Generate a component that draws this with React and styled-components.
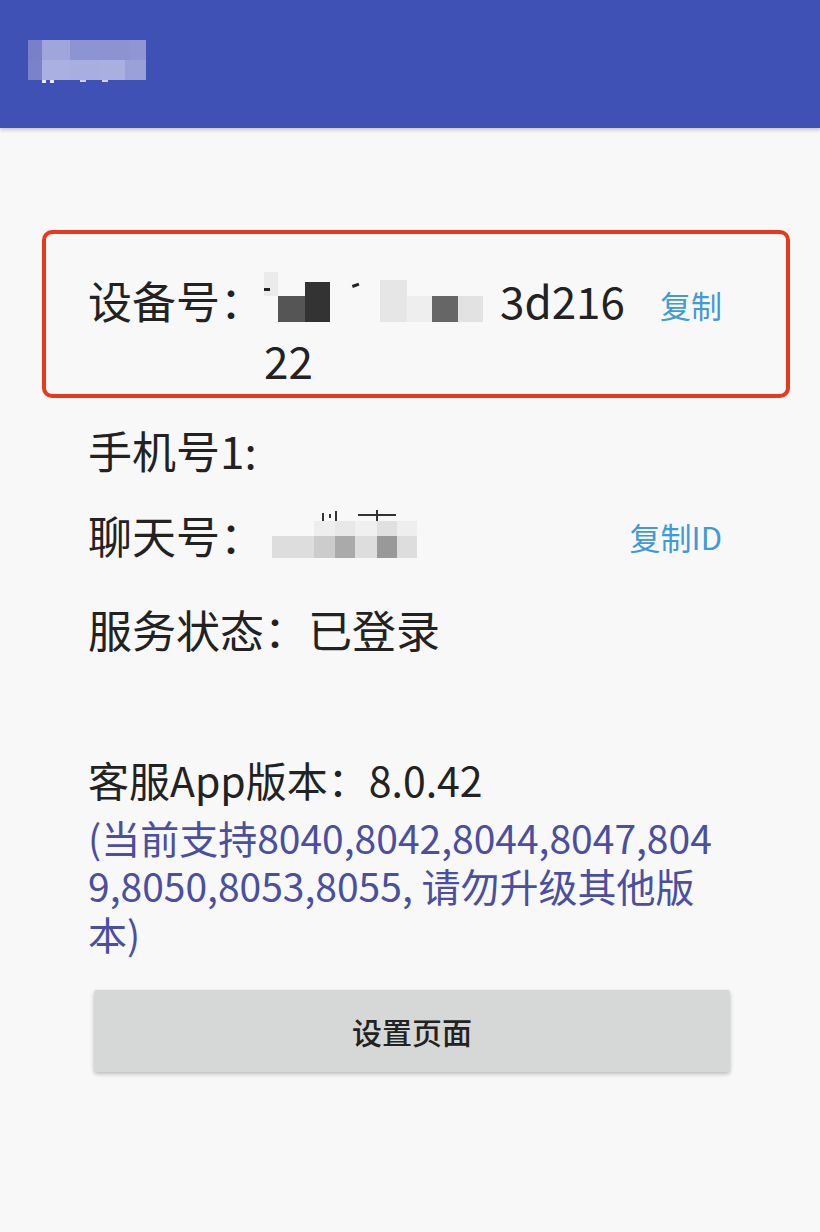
import styled, { createGlobalStyle } from "styled-components";

const GlobalStyle = createGlobalStyle`
  html, body {
    margin: 0;
    padding: 0;
    background: #f8f8f8;
  }
  body {
    font-family: "Noto Sans CJK SC", "Noto Sans", sans-serif;
    color: #222;
  }
`;

const Pagina = styled.div`
  width: 820px;
  min-height: 1232px;
  background: #f8f8f8;
`;

const Cabecera = styled.header`
  height: 128px;
  background: #3f51b5;
  box-shadow: 0 2px 4px rgba(0, 0, 0, 0.22);
  display: flex;
  align-items: flex-start;
  padding: 40px 0 0 28px;
  box-sizing: border-box;
`;

const Contenido = styled.main`
  padding: 102px 30px 0 42px;
  display: flex;
  flex-direction: column;
`;

const CajaDestacada = styled.section`
  border: 4px solid #e6391f;
  border-radius: 10px;
  padding: 36px 64px 4px 42px;
`;

const Fila = styled.div`
  display: flex;
  align-items: flex-start;
  margin-top: ${props => props.$top || 0}px;
  padding: ${props => (props.$inset ? "0 68px 0 46px" : "0")};
  font-size: 44px;
  line-height: 60px;
  min-height: 60px;
`;

const Etiqueta = styled.span`
  flex-shrink: 0;
  white-space: nowrap;
`;

const Valor = styled.span`
  flex: 1;
  min-width: 0;
  word-break: break-all;
  padding-left: ${props => props.$pad || 0}px;
`;

const Mosaico = styled.svg`
  display: inline-block;
  vertical-align: ${props => props.$shift || 0}px;
`;

const Copiar = styled.span`
  flex-shrink: 0;
  font-size: 31px;
  line-height: 60px;
  color: #3f9ad6;
  margin-top: ${props => props.$top || 0}px;
  margin-left: ${props => props.$gap || 0}px;
`;

const Version = styled.div`
  margin-top: 90px;
  padding-left: 46px;
  font-size: 41px;
  line-height: 60px;
`;

const Nota = styled.p`
  margin: 4px 0 0;
  padding-left: 46px;
  font-size: 39px;
  line-height: 48px;
  color: #4a4f9e;
`;

const Boton = styled.button`
  margin: 33px 60px 0 52px;
  height: 82px;
  border: none;
  border-radius: 3px;
  background: #d6d7d7;
  box-shadow: 0 2px 4px rgba(0, 0, 0, 0.25);
  font-family: "Noto Sans CJK SC", sans-serif;
  font-size: 30px;
  font-weight: 500;
  color: #222;
  cursor: pointer;
`;

const bloques = (lista) =>
  lista.map(([x, y, w, h, c], i) => <rect key={i} x={x} y={y} width={w} height={h} fill={c} />);

const TituloBorroso = () => (
  <svg width="118" height="44" viewBox="0 0 118 44">
    {bloques([
      [0, 0, 14, 20, "#7880c8"],
      [14, 0, 28, 20, "#a0a6dc"],
      [42, 0, 30, 20, "#8d94d2"],
      [72, 0, 30, 20, "#8c93d0"],
      [102, 0, 16, 20, "#8f96d3"],
      [0, 20, 14, 20, "#7a82c9"],
      [14, 20, 28, 20, "#aab0e0"],
      [42, 20, 30, 20, "#a8aede"],
      [72, 20, 25, 20, "#a9afde"],
      [97, 20, 21, 20, "#9aa1d8"],
      [14, 40, 4, 3, "#e8eaf8"],
      [22, 40, 4, 3, "#e8eaf8"],
      [52, 40, 6, 2, "#cfd3f0"],
      [74, 40, 6, 2, "#cfd3f0"],
    ])}
  </svg>
);

const DispositivoBorroso = () => (
  <Mosaico $shift={-3} width="236" height="50" viewBox="0 0 236 50">
    {bloques([
      [0, 0, 14, 24, "#ebebeb"],
      [14, 24, 27, 26, "#555"],
      [41, 10, 25, 40, "#333"],
      [116, 8, 27, 42, "#e6e6e6"],
      [143, 24, 25, 26, "#eeeeee"],
      [168, 24, 26, 26, "#666"],
      [194, 24, 25, 26, "#e2e2e2"],
    ])}
    <rect x="0" y="16" width="6" height="3" fill="#222" />
    <rect x="88" y="12" width="7" height="3" fill="#222" transform="rotate(-20 91 13)" />
  </Mosaico>
);

const ChatBorroso = () => (
  <Mosaico $shift={-4} width="145" height="50" viewBox="0 0 145 50">
    {bloques([
      [42, 13, 21, 15, "#eeeeee"],
      [63, 13, 20, 15, "#e8e8e8"],
      [83, 13, 22, 15, "#f0f0f0"],
      [105, 13, 20, 15, "#e0e0e0"],
      [125, 13, 20, 15, "#eeeeee"],
      [0, 28, 42, 22, "#dddddd"],
      [42, 28, 21, 22, "#cccccc"],
      [63, 28, 20, 22, "#aaaaaa"],
      [83, 28, 22, 22, "#dddddd"],
      [105, 28, 20, 22, "#999999"],
      [125, 28, 20, 22, "#dddddd"],
    ])}
    <rect x="50" y="5" width="2" height="8" fill="#333" />
    <rect x="57" y="6" width="2" height="4" fill="#333" />
    <rect x="63" y="3" width="2" height="10" fill="#333" />
    <rect x="86" y="6" width="38" height="2" fill="#333" />
    <rect x="104" y="2" width="2" height="11" fill="#333" />
  </Mosaico>
);

const App = () => {
  return (
    <Pagina>
      <GlobalStyle />
      <Cabecera>
        <TituloBorroso />
      </Cabecera>
      <Contenido>
        <CajaDestacada>
          <Fila>
            <Etiqueta>设备号：</Etiqueta>
            <Valor>
              <DispositivoBorroso />3d21622
            </Valor>
            <Copiar $top={5} $gap={34}>复制</Copiar>
          </Fila>
        </CajaDestacada>
        <Fila $inset $top={22}>
          <Etiqueta>手机号1:</Etiqueta>
        </Fila>
        <Fila $inset $top={25}>
          <Etiqueta>聊天号：</Etiqueta>
          <Valor $pad={8}>
            <ChatBorroso />
          </Valor>
          <Copiar $top={2}>复制ID</Copiar>
        </Fila>
        <Fila $inset $top={32}>
          <Etiqueta>服务状态：已登录</Etiqueta>
        </Fila>
        <Version>客服App版本：8.0.42</Version>
        <Nota>
          (当前支持8040,8042,8044,8047,804
          <br />
          9,8050,8053,8055, 请勿升级其他版
          <br />
          本)
        </Nota>
        <Boton type="button">设置页面</Boton>
      </Contenido>
    </Pagina>
  );
};

export default App;
